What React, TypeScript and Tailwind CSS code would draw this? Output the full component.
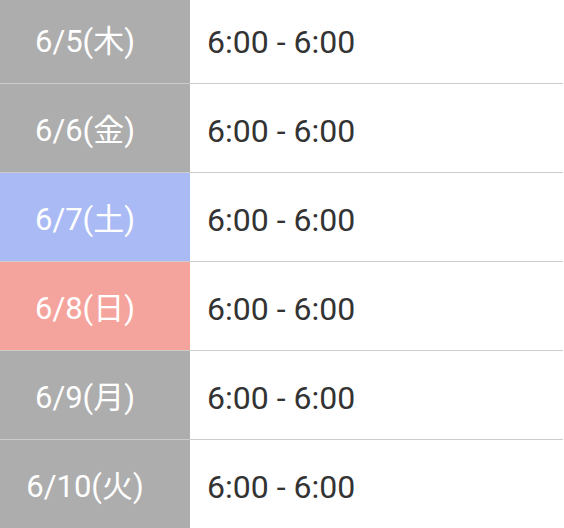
import React from "react";

const rows = [
  { d: "6/5(木)", bg: "bg-[#adadad]" },
  { d: "6/6(金)", bg: "bg-[#adadad]" },
  { d: "6/7(土)", bg: "bg-[#aabaf5]" },
  { d: "6/8(日)", bg: "bg-[#f5a49d]" },
  { d: "6/9(月)", bg: "bg-[#adadad]" },
  { d: "6/10(火)", bg: "bg-[#adadad]" },
];

export default function App() {
  return (
    <div
      className="w-[564px] h-[528px] overflow-hidden bg-white"
      style={{ fontFamily: 'Roboto, "Noto Sans CJK JP", sans-serif' }}
    >
      <div className="-mt-[5px] w-[563px]">
        {rows.map((r) => (
          <div key={r.d} className="flex h-[89px] border-b border-[#cccccc]">
            <div className={`w-[190px] flex items-center justify-center pt-[6px] pr-[20px] text-white text-[31px] ${r.bg}`}>
              {r.d}
            </div>
            <div className="flex-1 flex items-center pt-[6px] pl-[17px] text-[#333333] text-[32px]">
              6:00 - 6:00
            </div>
          </div>
        ))}
      </div>
    </div>
  );
}
